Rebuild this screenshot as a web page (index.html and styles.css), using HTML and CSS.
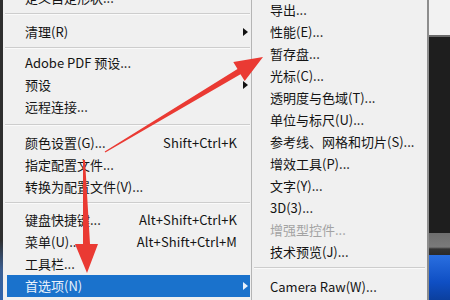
FILE: index.html
```html
<!DOCTYPE html>
<html lang="zh-CN">
<head>
<meta charset="utf-8">
<title>首选项菜单</title>
<link rel="stylesheet" href="styles.css">
</head>
<body>
<div class="screen">
  <div class="edge"></div>
  <div class="menu main">
    <div class="row first"><span class="label">定义自定形状...</span><span class="key"></span><span class="sub"></span></div>
    <div class="sep sep-a"></div>
    <div class="row"><span class="label">清理(R)</span><span class="key"></span><span class="sub"><i class="tri"></i></span></div>
    <div class="sep sep-b"></div>
    <div class="row"><span class="label">Adobe PDF 预设...</span><span class="key"></span><span class="sub"></span></div>
    <div class="row"><span class="label">预设</span><span class="key"></span><span class="sub"><i class="tri"></i></span></div>
    <div class="row"><span class="label">远程连接...</span><span class="key"></span><span class="sub"></span></div>
    <div class="sep sep-c"></div>
    <div class="row"><span class="label">颜色设置(G)...</span><span class="key">Shift+Ctrl+K</span><span class="sub"></span></div>
    <div class="row"><span class="label">指定配置文件...</span><span class="key"></span><span class="sub"></span></div>
    <div class="row"><span class="label">转换为配置文件(V)...</span><span class="key"></span><span class="sub"></span></div>
    <div class="sep sep-d"></div>
    <div class="row"><span class="label">键盘快捷键...</span><span class="key">Alt+Shift+Ctrl+K</span><span class="sub"></span></div>
    <div class="row"><span class="label">菜单(U)...</span><span class="key">Alt+Shift+Ctrl+M</span><span class="sub"></span></div>
    <div class="row"><span class="label">工具栏...</span><span class="key"></span><span class="sub"></span></div>
    <div class="row active"><span class="label">首选项(N)</span><span class="key"></span><span class="sub"><i class="tri"></i></span></div>
  </div>
  <div class="menu submenu">
    <div class="srow first">导出...</div>
    <div class="srow">性能(E)...</div>
    <div class="srow">暂存盘...</div>
    <div class="srow">光标(C)...</div>
    <div class="srow">透明度与色域(T)...</div>
    <div class="srow">单位与标尺(U)...</div>
    <div class="srow">参考线、网格和切片(S)...</div>
    <div class="srow">增效工具(P)...</div>
    <div class="srow">文字(Y)...</div>
    <div class="srow">3D(3)...</div>
    <div class="srow disabled">增强型控件...</div>
    <div class="srow">技术预览(J)...</div>
    <div class="ssep"></div>
    <div class="srow">Camera Raw(W)...</div>
  </div>
  <div class="backdrop">
    <div class="bd-top"></div>
    <div class="bd-dark"></div>
    <div class="bd-gray"></div>
    <div class="bd-blue"></div>
  </div>
  <svg class="arrows" width="450" height="300" viewBox="0 0 450 300" aria-hidden="true">
    <polygon class="arrow" points="104.7,151.6 105.3,152.4 240.5,74.2 244.7,80.9 263,57 233.3,62 237.5,69.0"/>
    <polygon class="arrow" points="83,160 85,160 90,244 98,244 87,273 75,244 83,244"/>
  </svg>
</div>
</body>
</html>
```

FILE: styles.css
```css
* { box-sizing: border-box; }

html, body {
  margin: 0;
  padding: 0;
  width: 450px;
  height: 300px;
  overflow: hidden;
  background: #f0f0f0;
}

.screen {
  position: relative;
  display: flex;
  width: 450px;
  height: 300px;
  overflow: hidden;
  font-family: "Noto Sans CJK SC", "Noto Sans", sans-serif;
  font-size: 13px;
  color: #141414;
}

.edge {
  width: 3px;
  flex: none;
  background: linear-gradient(to bottom, #2e2e2e 0, #2e2e2e 240px, #3c5f92 270px, #2f64ad 300px);
}

.menu {
  background: #f0f0f0;
  display: flex;
  flex-direction: column;
}

.main {
  width: 249px;
  flex: none;
  padding-left: 4px;
  padding-right: 1px;
  border-right: 1px solid #b5b5b5;
}

.row {
  height: 22px;
  flex: none;
  display: grid;
  grid-template-columns: 1fr auto 13px;
  align-items: center;
  padding-left: 18px;
  line-height: 22px;
  white-space: nowrap;
}

.row.first { margin-top: -13px; }

.key {
  font-size: 13px;
  letter-spacing: 0.1px;
}

.sub {
  display: flex;
  align-items: center;
  padding-left: 6px;
}

.tri {
  display: block;
  width: 0;
  height: 0;
  border-top: 4px solid transparent;
  border-bottom: 4px solid transparent;
  border-left: 5px solid #111;
}

.row.active {
  background: #1a72cc;
  color: #e9f1fb;
}

.row.active .tri { border-left-color: #e9f1fb; }

.sep {
  flex: none;
  display: flex;
  flex-direction: column;
  margin-left: -2px;
}
.sep::before {
  content: "";
  display: block;
  height: 1px;
  background: #cdcdcd;
  border-bottom: 1px solid #fafafa;
  box-sizing: content-box;
}

.sep-a { height: 12px; padding-top: 4px; }
.sep-b { height: 9px; padding-top: 4px; }
.sep-c { height: 14px; padding-top: 6px; }
.sep-d { height: 11px; padding-top: 4px; }

.submenu {
  width: 177px;
  flex: none;
  border-right: 2px solid #8d8d8d;
}

.srow {
  height: 22px;
  flex: none;
  line-height: 22px;
  padding-left: 18px;
  white-space: nowrap;
}

.srow.first { margin-top: -1px; }

.srow.disabled { color: #a3a3a3; }

.ssep {
  height: 13px;
  flex: none;
  padding-top: 4px;
  margin: 0 2px 0 2px;
}
.ssep::before {
  content: "";
  display: block;
  height: 1px;
  background: #cdcdcd;
  border-bottom: 1px solid #fafafa;
  box-sizing: content-box;
}

.backdrop {
  flex: 1;
  display: flex;
  flex-direction: column;
}

.bd-top {
  height: 37px;
  background: #f2f2f2;
  border-bottom: 2px solid #6a6a6a;
}

.bd-dark {
  flex: 1;
  background: #1e1e1e;
}

.bd-gray {
  height: 22px;
  background: linear-gradient(to bottom, #6e6e6e 0, #7a7a7a 14px, #333 16px, #2a2a2a 22px);
}

.bd-blue {
  height: 45px;
  background: linear-gradient(to bottom, #2a6fe0, #0f4fc4 60%, #0b3f9e);
}

.arrows {
  position: absolute;
  left: 0;
  top: 0;
  pointer-events: none;
}

.arrow {
  fill: #ea3a33;
}
```
